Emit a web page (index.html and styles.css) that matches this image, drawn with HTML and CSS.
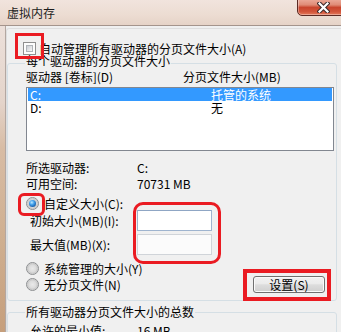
FILE: index.html
```html
<!DOCTYPE html>
<html lang="zh-CN">
<head>
<meta charset="utf-8">
<title>虚拟内存</title>
<link rel="stylesheet" href="styles.css">
</head>
<body>
<div class="window">
  <div class="titlebar">
    <span class="title">虚拟内存</span>
    <div class="close">
      <svg width="13" height="11" viewBox="0 0 13 11">
        <path d="M2.5 1.5 L10.5 9.5 M10.5 1.5 L2.5 9.5" stroke="#3b2a2a" stroke-width="4.2" stroke-linecap="square" fill="none"/>
        <path d="M2.5 1.5 L10.5 9.5 M10.5 1.5 L2.5 9.5" stroke="#ffffff" stroke-width="2.2" stroke-linecap="square" fill="none"/>
      </svg>
    </div>
  </div>
  <div class="frame">
    <div class="frame-left"></div>
    <div class="client">
      <div class="client-inner">
        <div class="auto-row"><span class="checkbox"></span><span>自动管理所有驱动器的分页文件大小(A)</span></div>
        <fieldset class="group g1">
          <legend>每个驱动器的分页文件大小</legend>
          <div class="list-head"><span class="hcol1">驱动器 [卷标](D)</span><span>分页文件大小(MB)</span></div>
          <div class="list">
            <div class="row sel"><span class="rcol1">C:</span><span>托管的系统</span></div>
            <div class="row"><span class="rcol1">D:</span><span>无</span></div>
          </div>
          <div class="info">
            <div class="info-row"><span class="k">所选驱动器:</span><span>C:</span></div>
            <div class="info-row"><span class="k">可用空间:</span><span>70731 MB</span></div>
          </div>
          <div class="radio-row custom"><span class="radio on"></span><span>自定义大小(C):</span></div>
          <div class="sizes">
            <div class="size-row"><span class="sk">初始大小(MB)(I):</span><span class="input focus"></span></div>
            <div class="size-row"><span class="sk">最大值(MB)(X):</span><span class="input"></span></div>
          </div>
          <div class="bottom">
            <div class="radios">
              <div class="radio-row"><span class="radio"></span><span>系统管理的大小(Y)</span></div>
              <div class="radio-row"><span class="radio"></span><span>无分页文件(N)</span></div>
            </div>
            <button class="btn">设置(S)</button>
          </div>
        </fieldset>
        <fieldset class="group g2">
          <legend>所有驱动器分页文件大小的总数</legend>
          <div class="total-row"><span class="sk">允许的最小值:</span><span>16 MB</span></div>
        </fieldset>
      </div>
    </div>
  </div>
  <div class="mark m-check"></div>
  <div class="mark m-radio"></div>
  <div class="mark m-input"></div>
  <div class="mark m-btn"></div>
</div>
</body>
</html>
```

FILE: styles.css
```css
html, body {
  margin: 0;
  padding: 0;
  background: #f0f0f0;
}
body {
  font-family: "Noto Sans CJK SC", "Noto Sans", sans-serif;
  font-size: 12px;
  color: #000;
}
.window {
  position: relative;
  width: 341px;
  height: 332px;
  overflow: hidden;
  background: #f0f0f0;
}
.titlebar {
  position: relative;
  height: 25px;
  border-bottom: 1px solid #a4948c;
  background: linear-gradient(to bottom, #f1e4dd 0%, #ecdcd2 60%, #e6d3c7 100%);
}
.title {
  display: block;
  padding-left: 7px;
  line-height: 26px;
  font-size: 12px;
  color: #1c1c1c;
}
.close {
  position: absolute;
  left: 297px;
  top: -3px;
  width: 47px;
  height: 19px;
  box-sizing: border-box;
  border: 1px solid #5c2a22;
  border-radius: 0 0 0 5px;
  background: linear-gradient(to bottom, #eeb2a2 0%, #e08c77 40%, #c9452d 56%, #d2553a 80%, #e47a5c 100%);
  box-shadow: inset 0 0 0 1px rgba(255,255,255,0.35);
  display: flex;
  align-items: center;
  justify-content: center;
  padding-left: 6px;
  padding-top: 2px;
}
.close svg { display: block; }
.frame {
  display: flex;
  height: 306px;
}
.frame-left {
  width: 5px;
  flex: none;
  border-right: 1px solid #b3a7a1;
  background: linear-gradient(to bottom, #ece0da 0%, #e4d4ca 25%, #d8bca4 40%, #cfaf90 70%, #c69f7c 100%);
}
.client {
  flex: 1;
  padding-top: 2px;
  min-width: 0;
}
.client-inner {
  border-left: 1px solid #dedede;
  border-top: 1px solid #dedede;
  border-top-left-radius: 3px;
  height: 100%;
}
.auto-row {
  display: flex;
  align-items: center;
  height: 13px;
  margin-top: 13px;
  padding-left: 16px;
  line-height: 13px;
  gap: 3px;
}
.checkbox {
  width: 13px;
  height: 13px;
  box-sizing: border-box;
  border: 1px solid #8f8f8f;
  padding: 2px;
  background: #fdfdfd;
  flex: none;
}
.checkbox::before {
  content: "";
  display: block;
  width: 100%;
  height: 100%;
  box-sizing: border-box;
  border: 1px solid #b0b4b9;
  background: linear-gradient(135deg, #c9cdd3 0%, #e6e7e9 60%, #f7f7f7 100%);
}
.group {
  margin: 0;
  width: 330px;
  box-sizing: border-box;
  border: 1px solid #d5dfe5;
  border-radius: 3px;
  min-width: 0;
}
.group legend {
  padding: 0 1px 4px;
  margin-left: -1px;
  line-height: 12px;
  font-size: 12px;
}
.g1 {
  padding: 0 2px 7px 18px;
}
.list-head {
  display: flex;
  line-height: 12px;
  height: 12px;
}
.hcol1 { width: 157px; flex: none; }
.list {
  margin-top: 4px;
  height: 64px;
  box-sizing: border-box;
  border: 1px solid #828790;
  background: #fff;
  padding: 0 1px;
}
.row {
  display: flex;
  height: 13px;
  line-height: 13px;
  padding-left: 2px;
}
.row.sel {
  background: #3399ff;
  color: #fff;
}
.rcol1 { width: 181px; flex: none; }
.info { margin-top: 9px; }
.info-row {
  display: flex;
  line-height: 16px;
  height: 16px;
}
.k { width: 111px; flex: none; }
.radio-row {
  display: flex;
  align-items: center;
  height: 13px;
  line-height: 13px;
  gap: 5px;
}
.custom { margin-top: 5px; }
.radio {
  width: 13px;
  height: 13px;
  box-sizing: border-box;
  border-radius: 50%;
  border: 1px solid #8c8e90;
  background: radial-gradient(circle at 50% 50%, #e9e9e9 0%, #dcdcdc 45%, #c8c8c8 62%, #f4f4f4 80%, #ffffff 100%);
  display: flex;
  align-items: center;
  justify-content: center;
  flex: none;
}
.radio.on::before {
  content: "";
  display: block;
  width: 7px;
  height: 7px;
  border-radius: 50%;
  background: radial-gradient(circle at 40% 35%, #bfe8ff 0%, #45a4ee 35%, #1b62ad 72%, #123f73 100%);
}
.sizes {
  display: flex;
  flex-direction: column;
  gap: 3px;
  padding-left: 4px;
}
.size-row {
  display: flex;
  align-items: center;
  height: 21px;
}
.sk { width: 107px; flex: none; }
.input {
  width: 75px;
  height: 21px;
  box-sizing: border-box;
  border: 1px solid #d0d4d9;
  background: #fbfbfb;
}
.input.focus {
  border-color: #9fb4cf;
  border-top-color: #8fa6c4;
  background: #fff;
}
.bottom {
  margin-top: 7px;
  height: 31px;
  display: flex;
  justify-content: space-between;
  align-items: flex-end;
}
.radios {
  align-self: flex-start;
  display: flex;
  flex-direction: column;
  gap: 3px;
}
.btn {
  width: 72px;
  height: 17px;
  margin: 0 9px 0 0;
  padding: 0;
  box-sizing: border-box;
  border: 1px solid #707070;
  border-radius: 3px;
  background: linear-gradient(to bottom, #f2f2f2 0%, #ebebeb 45%, #dddddd 52%, #cfcfcf 100%);
  box-shadow: inset 0 0 0 1px #fafafa;
  font-family: "Noto Sans CJK SC", "Noto Sans", sans-serif;
  font-size: 12px;
  line-height: 15px;
  color: #000;
}
.g2 {
  margin-top: 5px;
  padding: 6px 2px 0 18px;
}
.g2 legend { padding-bottom: 0; }
.total-row {
  display: flex;
  padding-left: 4px;
  line-height: 14px;
  height: 14px;
}
.mark {
  position: absolute;
  box-sizing: border-box;
  border: 3px solid #ea1b22;
}
.m-check { left: 15px; top: 33px; width: 29px; height: 26px; }
.m-radio { left: 18px; top: 193px; width: 27px; height: 23px; border-radius: 6px; }
.m-input { left: 133px; top: 202px; width: 88px; height: 62px; border-radius: 10px; }
.m-btn { left: 243px; top: 269px; width: 88px; height: 32px; border-width: 4px; }
```
